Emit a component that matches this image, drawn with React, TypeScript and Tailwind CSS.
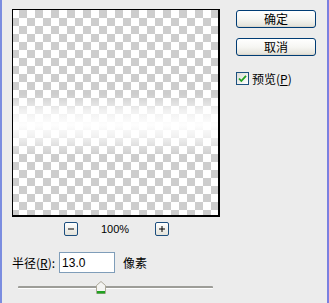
import React from "react";

const cjk = "font-['Noto_Sans_CJK_SC',sans-serif]";
const latin = "font-['Liberation_Sans','DejaVu_Sans',sans-serif]";

function XPButton({ label }: { label: string }) {
  return (
    <div
      className={`flex h-[18px] w-[80px] items-center justify-center rounded-[3px] border border-[#003c74] bg-[linear-gradient(to_bottom,#ffffff_0%,#f6f6f3_50%,#e6e5dd_90%,#d6d0c5_100%)] text-[12px] leading-none text-black ${cjk}`}
    >
      {label}
    </div>
  );
}

function SmallBtn({ sign }: { sign: "-" | "+" }) {
  return (
    <div className="flex h-[14px] w-[14px] items-center justify-center rounded-[2px] border border-[#1c4e7e] bg-[linear-gradient(to_bottom,#ffffff,#e3e2da)]">
      <svg width="8" height="8" viewBox="0 0 8 8">
        <rect x="1" y="3.5" width="6" height="1" fill="#000" />
        {sign === "+" && <rect x="3.5" y="1" width="1" height="6" fill="#000" />}
      </svg>
    </div>
  );
}

export default function App() {
  return (
    <div className="flex h-[303px] w-[329px] flex-col border-l-2 border-r-2 border-l-[#7b8de0] border-r-[#7b80e0] bg-[#ececec] pl-[10px] pt-[9px]">
      <div className="flex">
        <div className="flex flex-col">
          <div className="relative h-[208px] w-[208px] border-t border-l border-r-2 border-b-2 border-black bg-white bg-[repeating-conic-gradient(#cdcdcd_0%_25%,#ffffff_0%_50%)] bg-[size:16px_16px] bg-[position:-2px_0px]">
            <div className="absolute inset-0 bg-[linear-gradient(to_bottom,rgba(255,255,255,0)_41%,rgba(255,255,255,0.7)_49%,rgba(255,255,255,0.97)_56%,rgba(255,255,255,0.7)_62%,rgba(255,255,255,0)_71%)]" />
          </div>
          <div className="mt-[5px] flex h-[14px] items-center justify-center pl-[1px]">
            <SmallBtn sign="-" />
            <span className={`ml-[23px] w-[28px] text-[11px] leading-none text-black ${latin}`}>100%</span>
            <div className="ml-[26px]">
              <SmallBtn sign="+" />
            </div>
          </div>
        </div>
        <div className="ml-[16px] mt-[1px] flex flex-col">
          <XPButton label="确定" />
          <div className="mt-[10px]">
            <XPButton label="取消" />
          </div>
          <div className="mt-[16px] flex items-center">
            <div className="flex h-[13px] w-[13px] items-center justify-center border border-[#1c5180] bg-[linear-gradient(135deg,#dcdcd7,#ffffff)]">
              <svg width="9" height="9" viewBox="0 0 9 9">
                <path d="M1 4.5 L3.3 7 L8 1.8" stroke="#21a121" strokeWidth="1.8" fill="none" />
              </svg>
            </div>
            <span className={`ml-[3px] text-[12px] leading-none text-black ${cjk}`}>
              预览(<span className="underline underline-offset-1">P</span>)
            </span>
          </div>
        </div>
      </div>
      <div className="mt-[16px] flex h-[21px] items-center">
        <span className={`text-[12px] leading-none text-black ${cjk}`}>
          半径(<span className="underline underline-offset-1">R</span>):
        </span>
        <div className="ml-[4px] flex h-[21px] w-[56px] items-center border border-[#7f9db9] bg-white pl-[2px]">
          <span className={`text-[12px] leading-none text-black ${latin}`}>13.0</span>
        </div>
        <span className={`ml-[8px] text-[12px] leading-none text-black ${cjk}`}>像素</span>
      </div>
      <div className="relative ml-[6px] mt-[8px] h-[13px] w-[195px]">
        <div className="absolute left-0 right-0 top-[5px] h-[3px] rounded-[1px] border-t-2 border-[#9d9d98] bg-white" />
        <svg className="absolute left-[78px] top-0" width="10" height="13" viewBox="0 0 10 13">
          <path d="M0.5 12.5 V4.5 L5 0.5 L9.5 4.5 V12.5 Z" fill="#f4f4f2" stroke="#aca899" />
          <rect x="1" y="10" width="8" height="2.5" fill="#21a121" />
        </svg>
      </div>
    </div>
  );
}
